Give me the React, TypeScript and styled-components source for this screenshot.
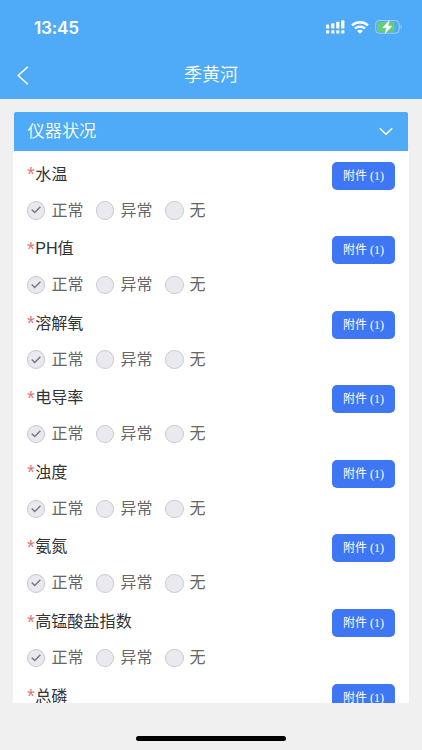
import React from "react";
import styled, { createGlobalStyle } from "styled-components";

const GlobalStyle = createGlobalStyle`
  * { box-sizing: border-box; }
  body {
    margin: 0;
    background: #f0f0f1;
    font-family: "Liberation Sans", "Noto Sans CJK SC", sans-serif;
  }
`;

const Screen = styled.div`
  display: flex;
  flex-direction: column;
  width: 422px;
  height: 750px;
  overflow: hidden;
  background: #f0f0f1;
`;

const Header = styled.header`
  flex: none;
  height: 98.5px;
  background: #4fabf7;
  color: #fff;
`;

const StatusBar = styled.div`
  display: flex;
  align-items: center;
  justify-content: space-between;
  height: 54px;
  padding: 0 19px 0 34px;
`;

const Clock = styled.span`
  padding-top: 1px;
  font: 600 17.2px/20px Inter, sans-serif;
  letter-spacing: -0.2px;
`;

const StatusIcons = styled.div`
  display: flex;
  align-items: center;
  gap: 6px;

  svg { display: block; }
`;

const NavBar = styled.div`
  display: grid;
  grid-template-columns: 40px 1fr 40px;
  align-items: center;
  height: 42px;
`;

const BackButton = styled.button`
  display: flex;
  padding: 0 0 0 17px;
  border: 0;
  background: none;
  color: inherit;
`;

const Title = styled.h1`
  margin: 0;
  font-size: 18px;
  font-weight: 350;
  line-height: 24px;
  text-align: center;
`;

const Card = styled.main`
  flex: none;
  width: 395.5px;
  height: 591px;
  margin: 13.5px 0 0 13px;
  overflow: hidden;
`;

const SectionHeader = styled.div`
  display: flex;
  align-items: center;
  justify-content: space-between;
  height: 39px;
  margin: 0 1px;
  padding: 0 14.5px 0 13.5px;
  border-radius: 2px 2px 0 0;
  background: #4fabf7;
  color: #fff;
  font-size: 17.2px;
  font-weight: 350;
  line-height: 24px;
`;

const SectionTitle = styled.span`
  padding-bottom: 2px;
`;

const List = styled.div`
  height: 552px;
  overflow: hidden;
  background: #fff;
`;

const Item = styled.section`
  height: 74.6px;
  padding: 10.5px 13.5px 0 14px;
`;

const ItemTop = styled.div`
  display: flex;
  justify-content: space-between;
  height: 38px;
`;

const Label = styled.div`
  color: #333;
  font-size: 16.1px;
  line-height: 24px;
  white-space: nowrap;
`;

const Required = styled.span`
  display: inline-block;
  width: 8.2px;
  color: #e2747b;
  font-size: 20px;
  line-height: 16px;
  vertical-align: -1.5px;
`;

const AttachButton = styled.button`
  width: 63px;
  height: 28px;
  padding: 0;
  border: 0;
  border-radius: 5px;
  background: #3f76f4;
  color: #fff;
  font: 12px/20px "Liberation Serif", "Noto Sans CJK SC", serif;
  white-space: nowrap;
`;

const Options = styled.div`
  display: flex;
  height: 22px;
`;

const Option = styled.div`
  display: flex;
  align-items: center;
  gap: 6px;
  width: 69.1px;
  color: #666;
  font-size: 16px;
  line-height: 22px;
  white-space: nowrap;
`;

const Radio = styled.span<{ $checked?: boolean }>`
  display: flex;
  align-items: center;
  justify-content: center;
  flex: none;
  width: 18.4px;
  height: 18.4px;
  border: 1px solid ${(p) => (p.$checked ? "#c8c8ce" : "#cbcbd0")};
  border-radius: 50%;
  background: #e9e9ef;
`;

const HomeIndicator = styled.div`
  flex: none;
  width: 150px;
  height: 5px;
  margin: 32.5px auto 0;
  border-radius: 3px;
  background: #000;
`;

const Signal = () => (
  <svg width="19" height="14" viewBox="0 0 19 14" fill="#fff">
    <rect x="0" y="4.6" width="3.2" height="4" rx="0.9" />
    <rect x="5.2" y="3.3" width="3.2" height="5.3" rx="0.9" />
    <rect x="10.2" y="1.8" width="3.2" height="6.8" rx="0.9" />
    <rect x="15.2" y="0.3" width="3.2" height="8.3" rx="0.9" />
    {[0, 5.2, 10.2, 15.2].map((x) => (
      <rect key={x} x={x} y="10.2" width="3.2" height="3.4" rx="0.9" />
    ))}
  </svg>
);

const Wifi = () => (
  <svg width="18" height="13" viewBox="0 0 18 13" fill="none" stroke="#fff" strokeWidth="2.3">
    <path d="M1 4.4C5.4.2 12.6.2 17 4.4" />
    <path d="M4 7.5c2.8-2.6 7.2-2.6 10 0" />
    <path d="M9 12.7 6.2 9.9c1.6-1.4 4-1.4 5.6 0Z" fill="#fff" stroke="none" />
  </svg>
);

const Battery = () => (
  <svg width="28" height="14" viewBox="0 0 28 14">
    <rect x="0.6" y="0.6" width="23.6" height="12.6" rx="3.4" fill="none" stroke="#a0d1fa" strokeWidth="1" />
    <rect x="2" y="2" width="17.5" height="9.8" rx="2" fill="#67cb79" />
    <path d="M25.6 4.8c1.7.6 1.7 3.6 0 4.2Z" fill="#a0d1fa" />
    <path d="M14.3.4 7.7 7.8h3.9L10 13.6l7-7.5h-4Z" fill="#fff" stroke="#fff" strokeWidth="0.4" />
  </svg>
);

const BackIcon = () => (
  <svg width="12" height="19" viewBox="0 0 12 19" fill="none" stroke="#fff" strokeWidth="1.5">
    <path d="M10.8 .9 1.2 9.5l9.6 8.7" />
  </svg>
);

const ChevronDown = () => (
  <svg width="14" height="9" viewBox="0 0 14 9" fill="none" stroke="#fff" strokeWidth="1.5">
    <path d="m.8 1.2 6.2 6 6.2-6" />
  </svg>
);

const Check = () => (
  <svg width="10" height="8" viewBox="0 0 10 8" fill="none" stroke="#77777c" strokeWidth="1.4">
    <path d="m.7 3.6 3 3L9.4.8" />
  </svg>
);

const labels = ["水温", "PH值", "溶解氧", "电导率", "浊度", "氨氮", "高锰酸盐指数", "总磷"];
const options = ["正常", "异常", "无"];

export default function App() {
  return (
    <>
      <GlobalStyle />
      <Screen>
        <Header>
          <StatusBar>
            <Clock>13:45</Clock>
            <StatusIcons>
              <Signal />
              <Wifi />
              <Battery />
            </StatusIcons>
          </StatusBar>
          <NavBar>
            <BackButton aria-label="返回">
              <BackIcon />
            </BackButton>
            <Title>季黄河</Title>
          </NavBar>
        </Header>
        <Card>
          <SectionHeader>
            <SectionTitle>仪器状况</SectionTitle>
            <ChevronDown />
          </SectionHeader>
          <List>
            {labels.map((label) => (
              <Item key={label}>
                <ItemTop>
                  <Label>
                    <Required>*</Required>
                    {label}
                  </Label>
                  <AttachButton>附件 (1)</AttachButton>
                </ItemTop>
                <Options>
                  {options.map((option, i) => (
                    <Option key={option}>
                      <Radio $checked={i === 0}>{i === 0 && <Check />}</Radio>
                      {option}
                    </Option>
                  ))}
                </Options>
              </Item>
            ))}
          </List>
        </Card>
        <HomeIndicator />
      </Screen>
    </>
  );
}
